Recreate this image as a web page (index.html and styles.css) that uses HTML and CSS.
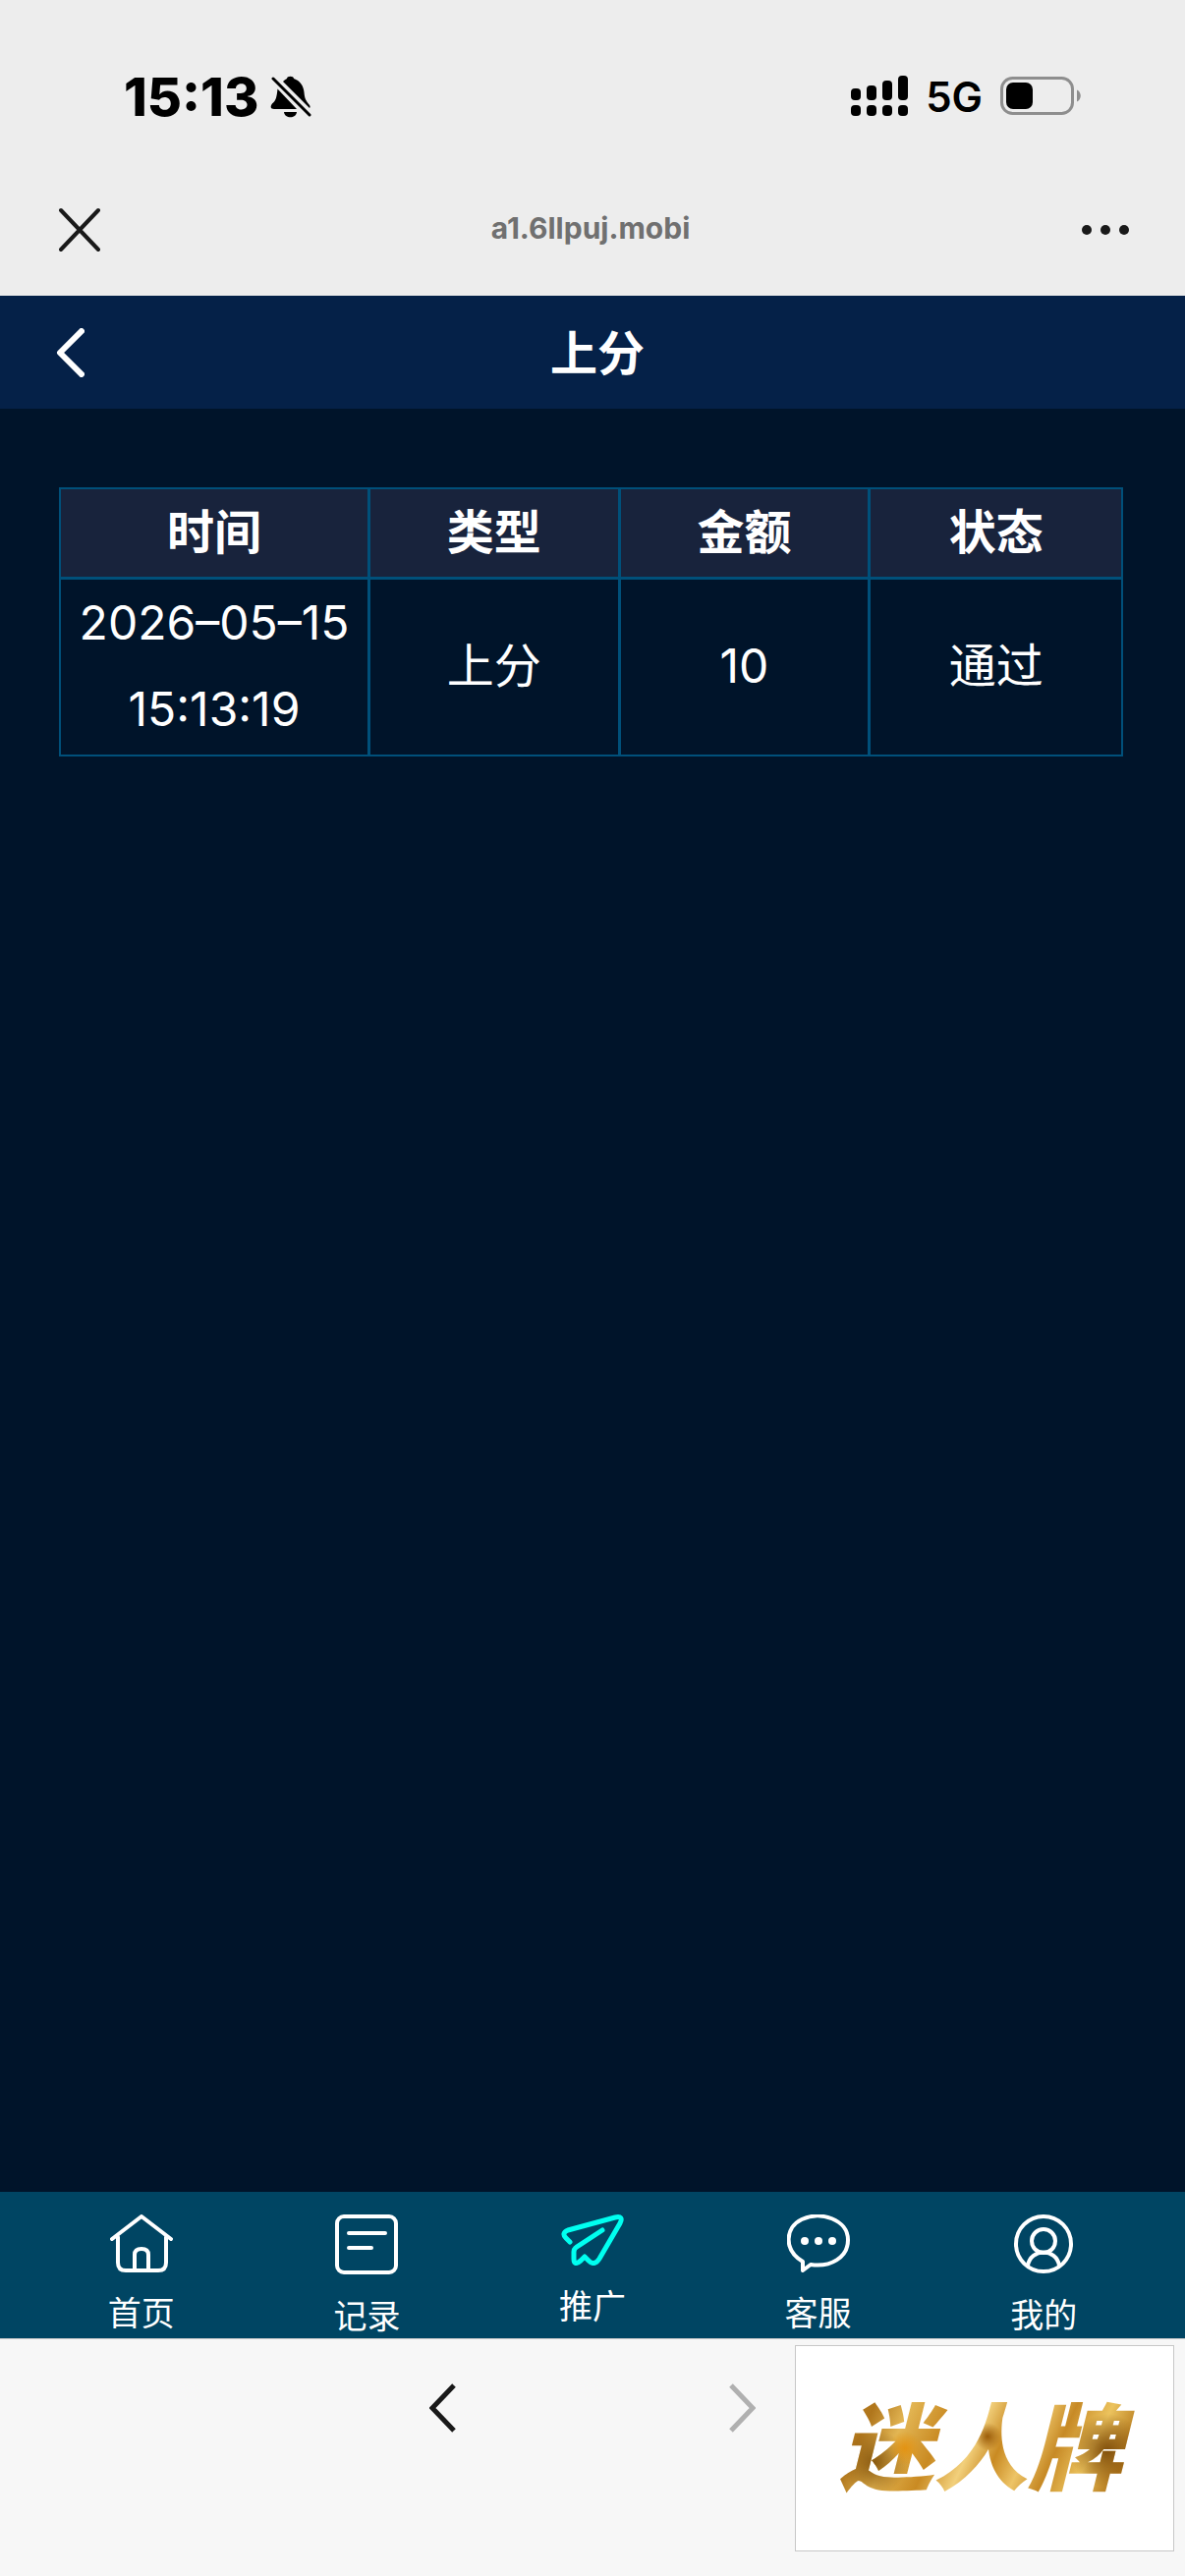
FILE: index.html
```html
<!DOCTYPE html>
<html lang="zh-CN">
<head>
    <meta charset="UTF-8">
    <meta name="viewport" content="width=device-width, initial-scale=1.0">
    <title>上分</title>
    <link rel="stylesheet" href="styles.css">
</head>
<body>

    <div class="status-bar">
        <div class="status-left">
            <span class="time">15:13</span>
            <svg class="bell" width="42" height="44" viewBox="0 0 42 44">
                <path d="M13 7C15 5 16 4.500 17 4C17 1 24 1 24 4C30 6 34 11 34.500 18C35 24 36 26 40 31C41 32.500 40.500 33.500 40 34Z" />
                <path d="M7.500 14.500L27 35H4C0 35 0 32 2 29.500C6 26 6.500 23 7.500 14.500Z" />
                <path d="M14 38H27C26.500 45 14.500 45 14 38Z" />
                <path class="slash" d="M3 4L40 41" />
            </svg>
        </div>
        <div class="status-right">
            <svg width="58" height="42" viewBox="0 0 58 42">
                <rect x="0" y="13" width="10" height="12" rx="4" />
                <rect x="16" y="10" width="10" height="15" rx="4" />
                <rect x="32" y="5" width="10" height="20" rx="4" />
                <rect x="48" y="0" width="10" height="25" rx="4" />
                <rect x="0" y="30" width="10" height="11" rx="4" />
                <rect x="16" y="30" width="10" height="11" rx="4" />
                <rect x="32" y="30" width="10" height="11" rx="4" />
                <rect x="48" y="30" width="10" height="11" rx="4" />
            </svg>
            <span class="network">5G</span>
            <svg width="82" height="40" viewBox="0 0 82 40">
                <rect x="1.500" y="1.500" width="72" height="36" rx="11" fill="none" stroke="#8e8e8e" stroke-width="3" />
                <rect x="6" y="6" width="27" height="27" rx="7" />
                <path d="M78 13.500C83 15.500 83 23.500 78 25.500Z" fill="#8e8e8e" />
            </svg>
        </div>
    </div>

    <div class="browser-bar">
        <button class="icon-btn close" aria-label="关闭">
            <svg width="42" height="46" viewBox="0 0 42 46">
                <path d="M2 3L40 43M40 3L2 43" />
            </svg>
        </button>
        <span class="url">a1.6llpuj.mobi</span>
        <button class="icon-btn" aria-label="更多">
            <svg class="dots" width="50" height="12" viewBox="0 0 50 12">
                <circle cx="6" cy="6" r="5" />
                <circle cx="25" cy="6" r="5" />
                <circle cx="44" cy="6" r="5" />
            </svg>
        </button>
    </div>

    <header class="page-header">
        <button class="icon-btn back" aria-label="返回">
            <svg width="30" height="50" viewBox="0 0 30 50">
                <path d="M29 1L5 25L29 49" />
            </svg>
        </button>
        <h1>上分</h1>
    </header>

    <main>
        <table class="record-table">
            <thead>
                <tr>
                    <th class="col-time" scope="col">时间</th>
                    <th scope="col">类型</th>
                    <th scope="col">金额</th>
                    <th scope="col">状态</th>
                </tr>
            </thead>
            <tbody>
                <tr>
                    <td>2026–05–15 15:13:19</td>
                    <td>上分</td>
                    <td>10</td>
                    <td>通过</td>
                </tr>
            </tbody>
        </table>
    </main>

    <nav class="tab-bar">
        <a href="#home">
            <svg width="64" height="59" viewBox="0 0 64 59">
                <path d="M2 25L32 2L62 25M8 23V49Q8 57 16 57H49Q57 57 57 49V23M25 57V41Q25 35 32 35Q39 35 39 41V57" />
            </svg>
            <span>首页</span>
        </a>
        <a href="#record">
            <svg width="64" height="62" viewBox="0 0 64 62">
                <rect x="2" y="2" width="60" height="57" rx="7" />
                <path d="M14 19H51M14 34H37" />
            </svg>
            <span>记录</span>
        </a>
        <a class="active" href="#promo">
            <svg width="64" height="52" viewBox="0 0 64 52">
                <path d="M9 28L5 24Q0 19 7 16L55 3Q64 1 60 9L39 45Q34 53 28 47L24 43L20 47Q13 53 13 45V38Q13 35 16 33L42 16" />
            </svg>
            <span>推广</span>
        </a>
        <a href="#service">
            <svg width="64" height="59" viewBox="0 0 64 59">
                <path d="M16 48C-4 36-2 13 15 5C34-4 62 5 62 26C62 44 44 54 24 51L16 57Z" />
                <g class="solid">
                    <circle cx="18" cy="27" r="4" />
                    <circle cx="32" cy="27" r="4" />
                    <circle cx="46" cy="27" r="4" />
                </g>
            </svg>
            <span>客服</span>
        </a>
        <a href="#mine">
            <svg width="64" height="61" viewBox="0 0 64 61">
                <circle cx="32" cy="30" r="28" />
                <circle cx="32" cy="27" r="12" />
                <path d="M16 52C19 34 45 34 48 52" />
            </svg>
            <span>我的</span>
        </a>
    </nav>

    <footer class="bottom-bar">
        <button class="icon-btn" aria-label="后退">
            <svg width="28" height="52" viewBox="0 0 28 52">
                <path d="M25 3L3 26L25 49" />
            </svg>
        </button>
        <button class="icon-btn disabled" aria-label="前进" disabled>
            <svg width="28" height="52" viewBox="0 0 28 52">
                <path d="M3 3L25 26L3 49" />
            </svg>
        </button>
        <div class="brand"><span>迷人牌</span></div>
    </footer>

</body>
</html>
```

FILE: styles.css
```css
* {
    box-sizing: border-box;
}

body {
    font-family: Inter, 'Noto Sans CJK SC', sans-serif;
    background-color: #00142a;
    color: #fff;
    display: flex;
    flex-direction: column;
    min-height: 100vh;
    margin: 0;
}

svg {
    display: block;
}

.icon-btn {
    padding: 0;
    border: none;
    background: none;
    cursor: pointer;
}

.icon-btn path {
    fill: none;
    stroke: #191919;
    stroke-width: 5;
}

/* phone status bar */
.status-bar {
    display: flex;
    justify-content: space-between;
    align-items: center;
    height: 166px;
    padding: 30px 106px 0 126px;
    background-color: #ededed;
    color: #000;
}

.status-left,
.status-right {
    display: flex;
    align-items: center;
}

.status-left {
    gap: 12px;
}

.status-right {
    gap: 18px;
}

.time {
    font-size: 54px;
    font-weight: 800;
}

.network {
    font-size: 42px;
    font-weight: 600;
}

.bell .slash {
    fill: none;
    stroke: #000;
    stroke-width: 3;
    stroke-linecap: round;
}

.browser-bar {
    display: flex;
    justify-content: space-between;
    align-items: center;
    height: 135px;
    padding: 0 56px 0 60px;
    background-color: #ededed;
}

.close path {
    stroke-width: 4;
    stroke-linecap: round;
}

.url {
    padding-bottom: 4px;
    color: #707070;
    font-size: 30px;
    font-weight: 700;
}

.dots {
    fill: #191919;
}

/* page title */
.page-header {
    display: grid;
    grid-template-columns: 1fr auto 1fr;
    align-items: center;
    height: 115px;
    padding: 0 46px 0 56px;
    background-color: #052148;
}

.page-header h1 {
    margin: 0;
    padding-bottom: 6px;
    font-size: 48px;
    font-weight: 600;
}

.back {
    justify-self: start;
}

.back path {
    stroke: #fff;
    stroke-width: 6;
    stroke-linejoin: round;
}

main {
    flex: 1;
    padding: 80px 63px 0 60px;
}

.record-table {
    width: 100%;
    table-layout: fixed;
    border: 2px solid #00507a;
    border-spacing: 0;
    font-size: 48px;
    line-height: 88px;
    text-align: center;
}

.record-table th,
.record-table td {
    padding: 0 0 2px;
    border-right: 3px solid #00507a;
}

.record-table th {
    padding-bottom: 1px;
    border-bottom: 3px solid #00507a;
    background-color: #18233c;
    font-weight: 700;
}

.record-table td {
    font-weight: 400;
}

.record-table th:last-child,
.record-table td:last-child {
    border-right: none;
}

.record-table .col-time {
    width: 315px;
}

/* tabs */
.tab-bar {
    display: grid;
    grid-template-columns: repeat(5, 1fr);
    height: 149px;
    padding: 23px 29px 0 29px;
    background-color: #004563;
}

.tab-bar a {
    display: flex;
    flex-direction: column;
    align-items: center;
    gap: 18px;
    color: #fff;
    font-size: 34px;
    line-height: 48px;
    text-decoration: none;
}

.tab-bar svg {
    fill: none;
    stroke: #fff;
    stroke-width: 4;
    stroke-linecap: round;
    stroke-linejoin: round;
}

.tab-bar .active svg {
    stroke: #00fff0;
    stroke-width: 5;
}

.tab-bar .solid {
    fill: #fff;
    stroke: none;
}

.bottom-bar {
    position: relative;
    display: flex;
    justify-content: center;
    align-items: flex-start;
    gap: 276px;
    height: 242px;
    padding-top: 44px;
    border-top: 1px solid #ccc;
    background-color: #f7f7f7;
}

.bottom-bar .disabled path {
    stroke: #b0b0b0;
}

/* floating logo over the toolbar */
.brand {
    position: absolute;
    top: 6px;
    right: 11px;
    display: flex;
    justify-content: center;
    align-items: center;
    width: 386px;
    height: 210px;
    border: 1px solid #c8c8c8;
    background-color: #fff;
}

.brand span {
    padding: 0 16px 0 8px;
    background-image:
        radial-gradient(circle at 24% 50%, #e39312 0, transparent 7%),
        radial-gradient(circle at 51% 40%, #9b5c08 0, transparent 8%),
        radial-gradient(circle at 90% 52%, #82500c 0, transparent 13%),
        radial-gradient(circle at 14% 62%, #8a5a10 0, transparent 12%),
        linear-gradient(115deg, #c18423 0%, #b0761c 14%, #e3b654 24%, #c98a22 36%, #f2d07c 46%, #c98a22 54%, #edc467 62%, #c78a26 70%, #ecc35e 80%, #b57a1d 90%, #d5a03d 100%);
    background-clip: text;
    color: transparent;
    font-size: 96px;
    font-style: italic;
    font-weight: 900;
    line-height: 120px;
}
```
